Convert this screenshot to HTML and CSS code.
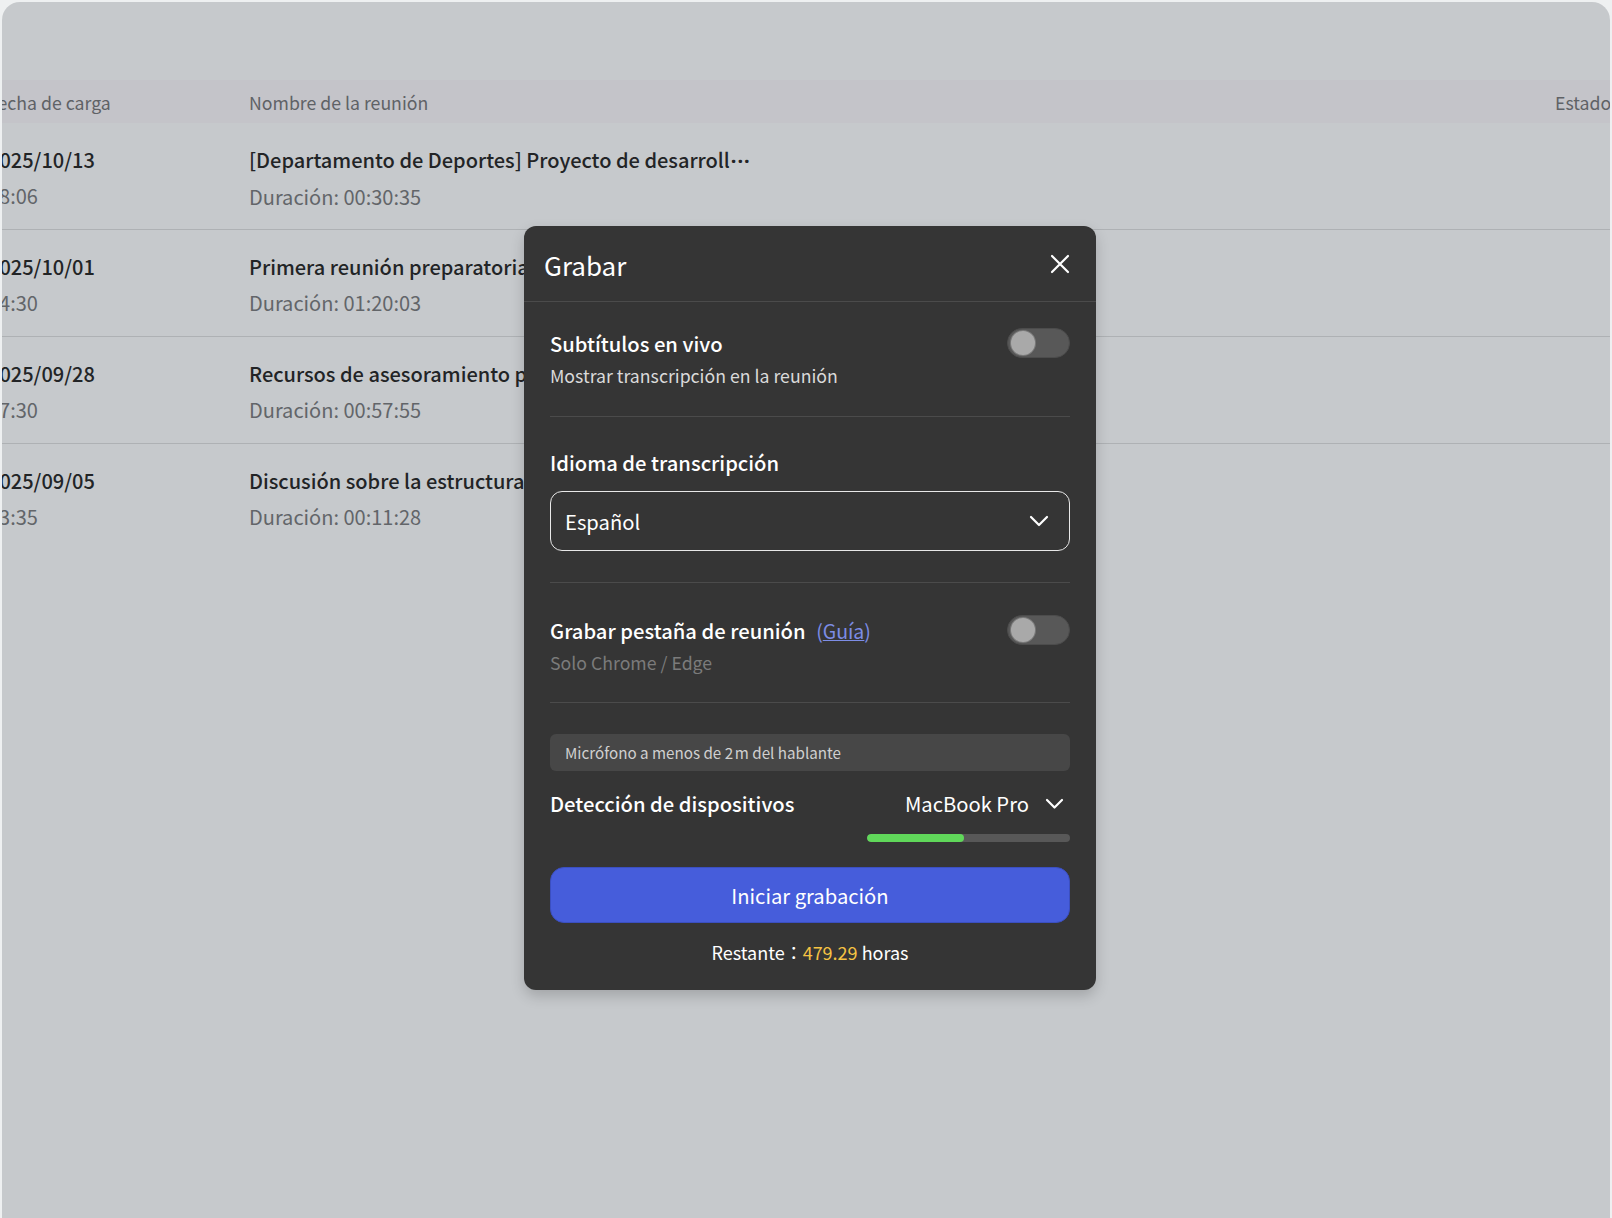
FILE: index.html
```html
<!DOCTYPE html>
<html>
<head>
  <meta charset="utf-8">
  <title>Grabar</title>
  <link rel="stylesheet" href="styles.css">
</head>
<body>
<div class="frame">
  <div class="list">
    <div class="row head">
      <span class="col-date">Fecha de carga</span>
      <span class="col-name">Nombre de la reunión</span>
      <span class="col-state">Estado</span>
    </div>
    <div class="row">
      <div class="col-date"><b>2025/10/13</b><i>18:06</i></div>
      <div class="col-name"><b>[Departamento de Deportes] Proyecto de desarroll<span class="dots">···</span></b><i>Duración: 00:30:35</i></div>
    </div>
    <div class="row">
      <div class="col-date"><b>2025/10/01</b><i>14:30</i></div>
      <div class="col-name"><b>Primera reunión preparatoria del comité organizador</b><i>Duración: 01:20:03</i></div>
    </div>
    <div class="row">
      <div class="col-date"><b>2025/09/28</b><i>17:30</i></div>
      <div class="col-name"><b>Recursos de asesoramiento para proyectos</b><i>Duración: 00:57:55</i></div>
    </div>
    <div class="row last">
      <div class="col-date"><b>2025/09/05</b><i>13:35</i></div>
      <div class="col-name"><b>Discusión sobre la estructura del informe anual</b><i>Duración: 00:11:28</i></div>
    </div>
  </div>

  <div class="modal">
    <div class="m-head">
      <span>Grabar</span>
      <svg class="close" width="20" height="20" viewBox="0 0 20 20"><path d="M2 2L18 18M18 2L2 18" stroke="#fff" stroke-width="2.2" stroke-linecap="round"/></svg>
    </div>
    <div class="m-body">
      <div class="sec s1">
        <div class="opt">
          <div>
            <div class="ttl">Subtítulos en vivo</div>
            <div class="sub">Mostrar transcripción en la reunión</div>
          </div>
          <div class="toggle"><span></span></div>
        </div>
      </div>
      <div class="sec s2">
        <div class="ttl">Idioma de transcripción</div>
        <div class="select">
          <span>Español</span>
          <svg width="20" height="12" viewBox="0 0 20 12"><path d="M2 2L10 10L18 2" fill="none" stroke="#fff" stroke-width="2.2" stroke-linecap="round" stroke-linejoin="round"/></svg>
        </div>
      </div>
      <div class="sec s3">
        <div class="opt">
          <div>
            <div class="ttl">Grabar pestaña de reunión <a class="guide">(<u>Guía</u>)</a></div>
            <div class="sub dim">Solo Chrome / Edge</div>
          </div>
          <div class="toggle"><span></span></div>
        </div>
      </div>
      <div class="sec s4">
        <div class="tip">Micrófono a menos de 2&#8239;m del hablante</div>
        <div class="device">
          <div class="ttl">Detección de dispositivos</div>
          <div class="pick">
            <span>MacBook Pro</span>
            <svg width="19" height="12" viewBox="0 0 19 12"><path d="M2 2L9.5 9.5L17 2" fill="none" stroke="#fff" stroke-width="2.2" stroke-linecap="round" stroke-linejoin="round"/></svg>
          </div>
        </div>
        <div class="level"><div class="fill" style="width: 48%"></div></div>
        <div class="btn">Iniciar grabación</div>
        <div class="left">Restante：<em>479.29</em> horas</div>
      </div>
    </div>
  </div>
</div>
</body>
</html>
```
FILE: styles.css
```css
html,body{margin:0;padding:0;}
body{
  background:#eef0f1;
  width:1612px;
  height:1218px;
  overflow:hidden;
  font-family:"Noto Sans CJK TC","Noto Sans",sans-serif;
}
.frame{
  position:relative;
  margin:2px 2px 0 2px;
  height:1216px;
  border-radius:18px 18px 0 0;
  background:#c6c9cc;
  overflow:hidden;
}
.list{
  margin:78px 0 0 -14px;
}
.row{
  display:flex;
  height:106px;
  border-bottom:1px solid #aeb1b4;
}
.row.last{border-bottom:none;}
.row.head{
  height:43px;
  align-items:center;
  background:#c4c4c9;
  border-bottom:none;
  font-size:17.7px;
  color:#5f6266;
}
.col-date{width:261px;flex:none;}
.col-name{flex:1;}
.col-state{width:60px;flex:none;margin-right:-5px;}
.row > div{
  display:flex;
  flex-direction:column;
  padding-top:20px;
}
.row b{
  font-weight:500;
  font-size:20px;
  line-height:34px;
  color:#222426;
  white-space:nowrap;
}
.row b .dots{
  margin-left:1px;
  font-family:"Noto Sans",sans-serif;
  font-weight:700;
  letter-spacing:1px;
}
.row i{
  margin-top:2px;
  font-style:normal;
  font-size:20px;
  line-height:34px;
  color:#626569;
}

/* modal */
.modal{
  position:absolute;
  left:522px;
  top:224px;
  width:572px;
  background:#353535;
  border-radius:12px;
  box-shadow:0 6px 14px rgba(0,0,0,0.18);
  color:#fff;
}
.m-head{
  display:flex;
  align-items:center;
  justify-content:space-between;
  height:75px;
  padding:0 26px 0 20px;
  border-bottom:1px solid #4b4b4b;
  font-size:26px;
}
.m-head span{padding-top:2px;}
.m-body{padding:0 26px 25px 26px;}
.sec{border-bottom:1px solid #4b4b4b;}
.sec.s4{border-bottom:none;}
.s1{padding:28px 0 28px 0;}
.s2{padding:32px 0 31px 0;}
.s3{padding:34px 0 27px 0;}
.s4{padding-top:31px;}
.opt{
  display:flex;
  justify-content:space-between;
  align-items:flex-start;
}
.ttl{
  font-size:20.2px;
  font-weight:500;
  line-height:28px;
}
.sub{
  margin-top:4px;
  font-size:17.7px;
  line-height:26px;
  color:#dadada;
}
.sub.dim{color:#7b7b7b;}
.guide{
  margin-left:6px;
  font-weight:400;
  color:#7d8de6;
  font-size:19.5px;
}
.toggle{
  width:58px;
  height:28px;
  margin-top:-2px;
  border:1px solid #4c4c4c;
  border-radius:16px;
  background:#585858;
  display:flex;
  align-items:center;
  padding-left:3px;
}
.toggle span{
  width:24px;
  height:24px;
  border-radius:50%;
  background:#a9a9a9;
  box-shadow:0 0 0 1px #7a7a7a;
}
.select{
  margin-top:14px;
  height:58px;
  border:1.5px solid #e8e8e8;
  border-radius:12px;
  display:flex;
  align-items:center;
  justify-content:space-between;
  padding:0 20px 0 14px;
  font-size:20.2px;
}
.tip{
  height:37px;
  line-height:37px;
  border-radius:6px;
  background:#474747;
  padding-left:15px;
  font-size:15.2px;
  color:#d0d0d0;
}
.device{
  margin-top:18px;
  display:flex;
  justify-content:space-between;
  align-items:center;
}
.pick{
  display:flex;
  align-items:center;
  gap:16px;
  font-size:20.2px;
  padding-right:6px;
}
.level{
  margin:16px 0 0 auto;
  width:203px;
  height:8px;
  border-radius:4px;
  background:#585858;
  overflow:hidden;
}
.fill{
  height:100%;
  border-radius:4px;
  background:#60d85a;
}
.btn{
  margin-top:25px;
  height:54px;
  border:1px solid #3b4fc0;
  border-radius:14px;
  background:#465ddb;
  display:flex;
  align-items:center;
  justify-content:center;
  font-size:20.2px;
}
.left{
  margin-top:16px;
  text-align:center;
  font-size:18px;
  line-height:26px;
}
.left em{font-style:normal;color:#f5c343;}
```
